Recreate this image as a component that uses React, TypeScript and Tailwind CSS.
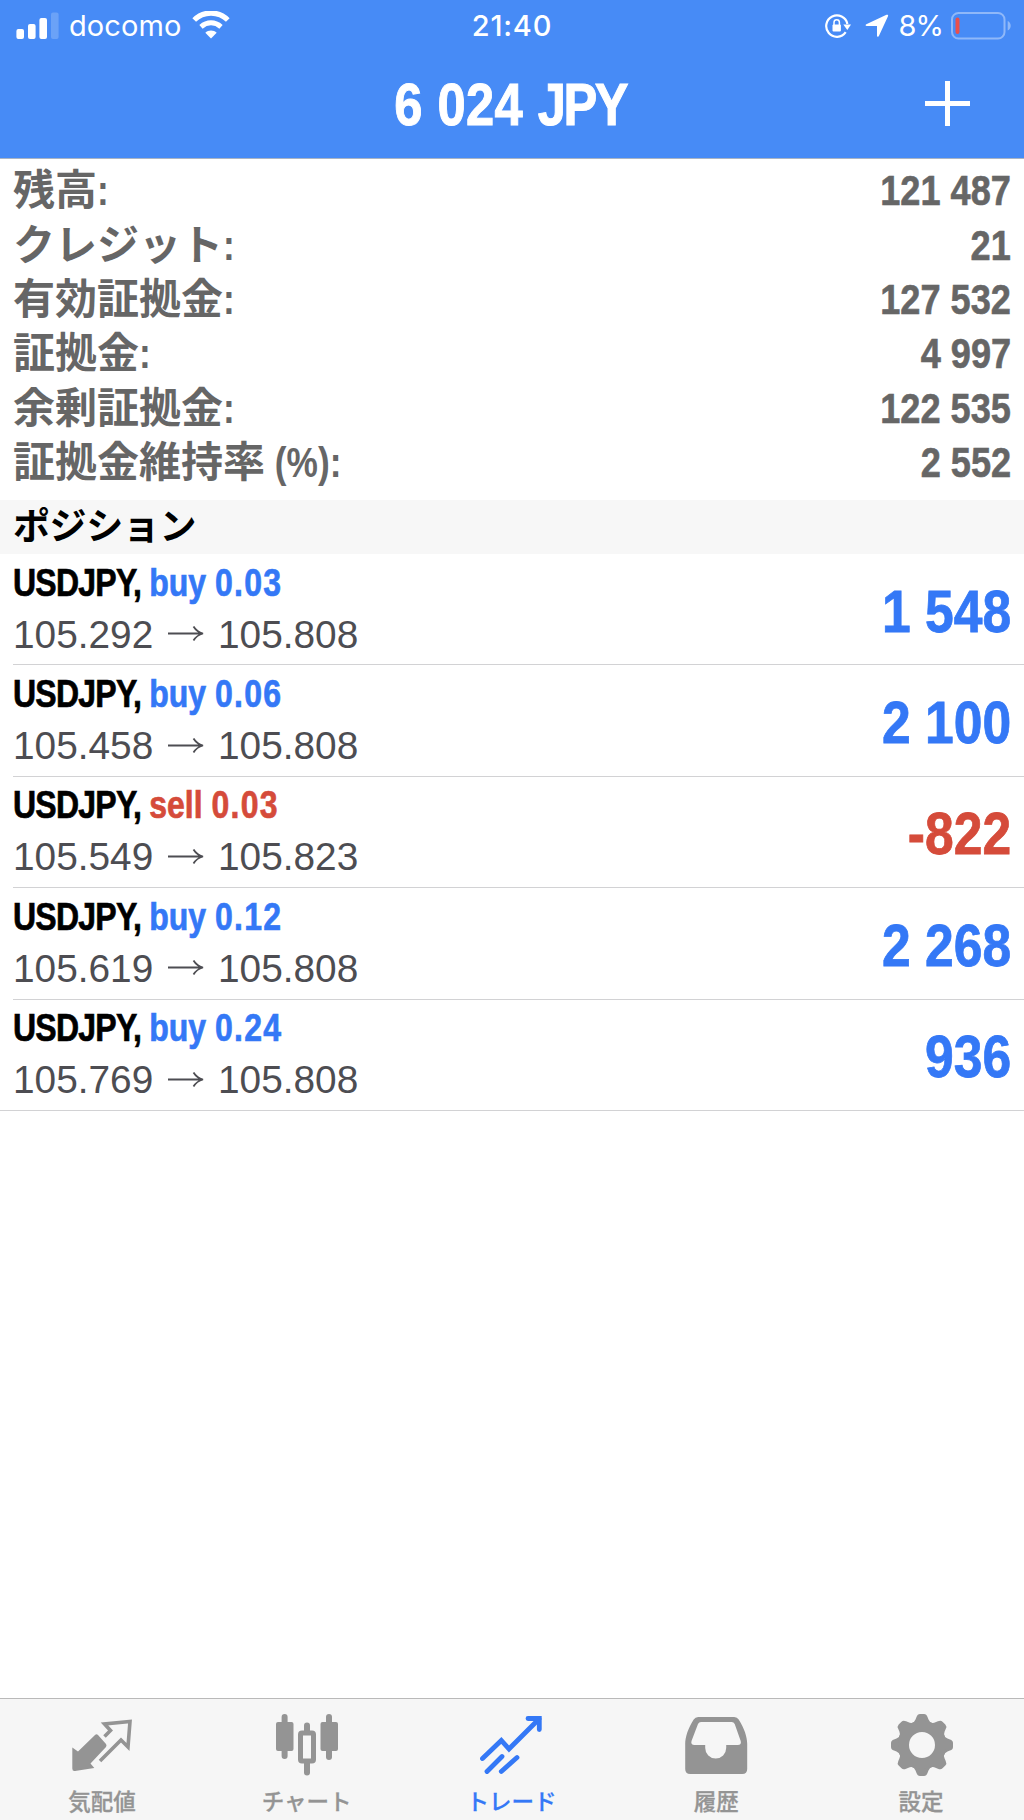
interface Position {
  side: 'buy' | 'sell';
  volume: string;
  open: string;
  current: string;
  profit: string;
}

const summary = [
  { label: '残高', suffix: ':', value: '121 487' },
  { label: 'クレジット', suffix: ':', value: '21' },
  { label: '有効証拠金', suffix: ':', value: '127 532' },
  { label: '証拠金', suffix: ':', value: '4 997' },
  { label: '余剰証拠金', suffix: ':', value: '122 535' },
  { label: '証拠金維持率', suffix: ' (%):', value: '2 552' },
];

const positions: Position[] = [
  { side: 'buy', volume: '0.03', open: '105.292', current: '105.808', profit: '1 548' },
  { side: 'buy', volume: '0.06', open: '105.458', current: '105.808', profit: '2 100' },
  { side: 'sell', volume: '0.03', open: '105.549', current: '105.823', profit: '-822' },
  { side: 'buy', volume: '0.12', open: '105.619', current: '105.808', profit: '2 268' },
  { side: 'buy', volume: '0.24', open: '105.769', current: '105.808', profit: '936' },
];

const StatusBar = () => (
  <div className="grid h-[51px] grid-cols-3 items-center px-4 font-['Inter',sans-serif] text-[29px] leading-none">
    {/* Carrier */}
    <div className="flex items-center">
      <svg width="43" height="27" viewBox="0 0 43 27" fill="currentColor">
        <rect x="0.4" y="17" width="7.6" height="10" rx="2" />
        <rect x="12" y="12" width="7.6" height="15" rx="2" />
        <rect x="23.4" y="6" width="7.6" height="21" rx="2" />
        <rect x="35" y="0.5" width="7.6" height="26.5" rx="2" opacity="0.2" />
      </svg>
      <span className="ml-2.5 tracking-[0.1px]">docomo</span>
      <svg className="-mt-0.5 ml-2.5" width="38" height="28" viewBox="0 0 38 28">
        <path d="M2.200 9C11.500-.3 26.500-.3 35.800 9" fill="none" stroke="currentColor" strokeWidth="5.200" />
        <path d="M9 15.800c6-5.300 14-5.300 20 0" fill="none" stroke="currentColor" strokeWidth="5" />
        <path d="M13.300 21.700c3-3 8.400-3 11.400 0L19 27.500z" fill="currentColor" />
      </svg>
    </div>

    <div className="text-center font-medium tracking-[0.8px]">21:40</div>

    {/* Battery side */}
    <div className="flex items-center justify-end">
      <svg width="28" height="26" viewBox="0 0 28 26" fill="none" stroke="currentColor">
        <path d="M21.700 19.200A10.700 10.700 0 1 1 23.400 11" strokeWidth="2.200" />
        <path d="M19.300 11.500h7.700l-3.700 5.500z" fill="currentColor" stroke="none" />
        <rect x="8.500" y="11.500" width="8.400" height="7" rx="1" fill="currentColor" stroke="none" />
        <path d="M10 12V9.500a2.700 2.700 0 0 1 5.400 0V12" strokeWidth="1.500" />
      </svg>
      <svg className="ml-[13px]" width="24" height="24" viewBox="0 0 24 24" fill="currentColor">
        <path d="M1.300 10.200 21.500.8c1.300-.5 2 .3 1.500 1.500L14 21.800c-.6 1.300-2 1-2-.4V12H1.700C.4 12 .2 10.800 1.300 10.200z" />
      </svg>
      <span className="ml-2.5 tracking-[-1px]">8%</span>
      <svg className="-mr-1 -mt-px ml-2" width="61" height="29" viewBox="0 0 61 29">
        <rect x="1" y="2" width="52.500" height="25.500" rx="6.500" fill="none" stroke="#8fb8f9" strokeWidth="2" />
        <rect x="4.500" y="6.500" width="4" height="16.500" rx="2" fill="#eb4f4a" />
        <path d="M56.700 10c4 1.500 4 8 0 9.500z" fill="#8fb8f9" />
      </svg>
    </div>
  </div>
);

const Header = () => (
  <header className="h-[159px] border-b border-[#a9b4c4] bg-[#478bf6] text-white">
    <StatusBar />
    <div className="grid h-[107px] grid-cols-[1fr_auto_1fr] items-center">
      {/* Narrowed to get a condensed bold look */}
      <h1 className="col-start-2 mr-[3px] scale-x-[0.845] text-[60px] leading-none font-bold tracking-[0.5px] [-webkit-text-stroke:1px_currentColor]">
        6 024 <span className="tracking-[-3px]">JPY</span>
      </h1>
      <button className="mr-[54px] -mt-[3px] justify-self-end" aria-label="New order">
        <svg className="block" width="45" height="45" viewBox="0 0 45 45" fill="currentColor">
          <path d="M20 0h5v45h-5z" />
          <path d="M0 20h45v5H0z" />
        </svg>
      </button>
    </div>
  </header>
);

const PositionRow = ({ side, volume, open, current, profit, last }: Position & { last: boolean }) => {
  const isLoss = profit.startsWith('-');

  return (
    <li className={last ? 'border-b border-[#d2d2d4] pl-[13px]' : 'ml-[13px] border-b border-[#d2d2d4]'}>
      <div className="flex h-[110.400px] items-center justify-between pr-[13px]">
        <div className="-mt-[2px]">
          <div className="origin-left scale-x-[0.82] text-[39px] leading-[52px] font-bold [-webkit-text-stroke:0.700px_currentColor]">
            <span className="tracking-[-0.900px]">USDJPY, </span>
            <span className={side === 'buy' ? 'text-[#3478f6]' : 'text-[#d54b3a]'}>
              {side} <span className="tracking-[1.500px]">{volume}</span>
            </span>
          </div>
          <div className="flex items-center text-[38.800px] leading-[51px] text-[#4d4d52]">
            <span className="w-[155px]">{open}</span>
            <svg className="mr-[14px]" width="36" height="18" viewBox="0 0 36 18" fill="none" stroke="currentColor" strokeWidth="1.800">
              <path d="M0 8.500h34M25.500 1.500C28 5.500 31 7.500 35 8.500c-4 1-7 3-9.500 7" />
            </svg>
            <span>{current}</span>
          </div>
        </div>
        <div
          className={`mt-[5px] origin-right scale-x-[0.86] text-[60px] leading-none font-bold [-webkit-text-stroke:0.800px_currentColor] ${isLoss ? 'text-[#d54b3a]' : 'text-[#3478f6]'}`}
        >
          {profit}
        </div>
      </div>
    </li>
  );
};

const QuotesIcon = () => (
  <svg width="64" height="64" viewBox="0 0 64 64" fill="currentColor">
    <path d="M2.300 34.500 8 38.500 25 22q1.500-1.500 3 0l8 9q1 1.500 0 3L20.500 50.500l3.800 4.500L5 58q-2.700.4-2.700-2.500z" />
    <path d="M34.500 23.500 40.500 17.500l-6-6.500L60 8.500l-2 25.500-7-7L30 48" fill="none" stroke="currentColor" strokeWidth="3.600" />
  </svg>
);

const ChartIcon = () => (
  <svg width="64" height="64" viewBox="0 0 64 64" fill="currentColor">
    <rect x="6.600" y="1" width="6" height="45" rx="3" />
    <rect x="1" y="9" width="17.500" height="29" rx="2" />
    <rect x="51" y="1" width="6" height="46" rx="3" />
    <rect x="45.500" y="9" width="17.500" height="29" rx="2" />
    <rect x="29" y="9.500" width="6" height="12" rx="3" />
    <rect x="29" y="46" width="6" height="16.500" rx="3" />
    <rect x="25.500" y="20" width="13" height="28" rx="1.500" fill="none" stroke="currentColor" strokeWidth="5" />
  </svg>
);

const TradeIcon = () => (
  <svg width="64" height="64" viewBox="0 0 64 64" fill="none" stroke="currentColor" strokeWidth="4.800" strokeLinecap="round">
    <path d="M2.500 45.500 21.300 27.500l7.700 8.500L59 6" />
    <path d="M48 5.500H59.300V16.500" />
    <path d="M7 58.500 22 43.500M21.300 58.500 37 44.500" />
  </svg>
);

const HistoryIcon = () => (
  <svg width="64" height="64" viewBox="0 0 64 64" fill="currentColor">
    <path
      fillRule="evenodd"
      d="M13.200 4h36q3 0 4.500 2.500C59.200 15 62.200 24 62.200 31v25q0 5-5 5H5.200q-5 0-5-5V31C.2 24 3.200 15 8.700 6.500Q10.200 4 13.200 4zM16 9q-2 0-3 2L6.500 28q-1 4 3 4h10.700v3a10.500 10.500 0 0 0 21 0v-3h11.500q4 0 3-4l-6-17q-1-2-3-2z"
    />
  </svg>
);

const SettingsIcon = () => (
  <svg width="64" height="64" viewBox="-32 -32 64 64" fill="currentColor">
    <defs>
      <path id="tooth" d="M-11-21.500q3.500-1 4.500-4l1-2.500q1-3 3.500-3h4q2.500 0 3.500 3l1 2.500q1 3 4.500 4z" />
    </defs>
    {[0, 45, 90, 135, 180, 225, 270, 315].map((angle) => (
      <use key={angle} href="#tooth" transform={`rotate(${angle})`} />
    ))}
    <circle r="18.500" fill="none" stroke="currentColor" strokeWidth="11" />
  </svg>
);

const tabs = [
  { label: '気配値', icon: QuotesIcon },
  { label: 'チャート', icon: ChartIcon },
  { label: 'トレード', icon: TradeIcon, active: true },
  { label: '履歴', icon: HistoryIcon },
  { label: '設定', icon: SettingsIcon },
];

const TabBar = () => (
  <nav className="grid h-[122px] grid-cols-5 border-t border-[#b9b9b9] bg-[#f6f6f6]">
    {tabs.map(({ label, icon: Icon, active }) => (
      <button key={label} className={`flex flex-col items-center pt-3.5 ${active ? 'text-[#3478f6]' : 'text-[#949494]'}`}>
        <Icon />
        <span className="mt-2.5 mr-px text-[22.500px] leading-[32px] font-medium [-webkit-text-stroke:0.300px_currentColor]">{label}</span>
      </button>
    ))}
  </nav>
);

const App = () => {
  return (
    <div className="flex h-[1820px] w-[1024px] flex-col overflow-hidden bg-white font-['Liberation_Sans','Noto_Sans_CJK_JP',sans-serif]">
      <Header />

      {/* Account summary */}
      <dl className="h-[340.500px] pt-[5px] text-[42px] font-bold text-[#666]">
        {summary.map((row) => (
          <div key={row.label} className="flex h-[54.400px] items-center justify-between px-[13px] leading-[54px]">
            <dt className="flex">
              {row.label}
              <span className="origin-left scale-x-[0.84] whitespace-pre">{row.suffix}</span>
            </dt>
            <dd className="origin-right scale-x-[0.86] [-webkit-text-stroke:0.600px_currentColor]">{row.value}</dd>
          </div>
        ))}
      </dl>

      {/* Open positions */}
      <h2 className="h-[54.500px] bg-[#f7f7f7] px-[13px] text-[37px] leading-[55px] font-bold tracking-[-0.400px]">ポジション</h2>
      <ul className="flex-1">
        {positions.map((position, i) => (
          <PositionRow key={position.open} {...position} last={i === positions.length - 1} />
        ))}
      </ul>

      <TabBar />
    </div>
  );
};

export default App;
